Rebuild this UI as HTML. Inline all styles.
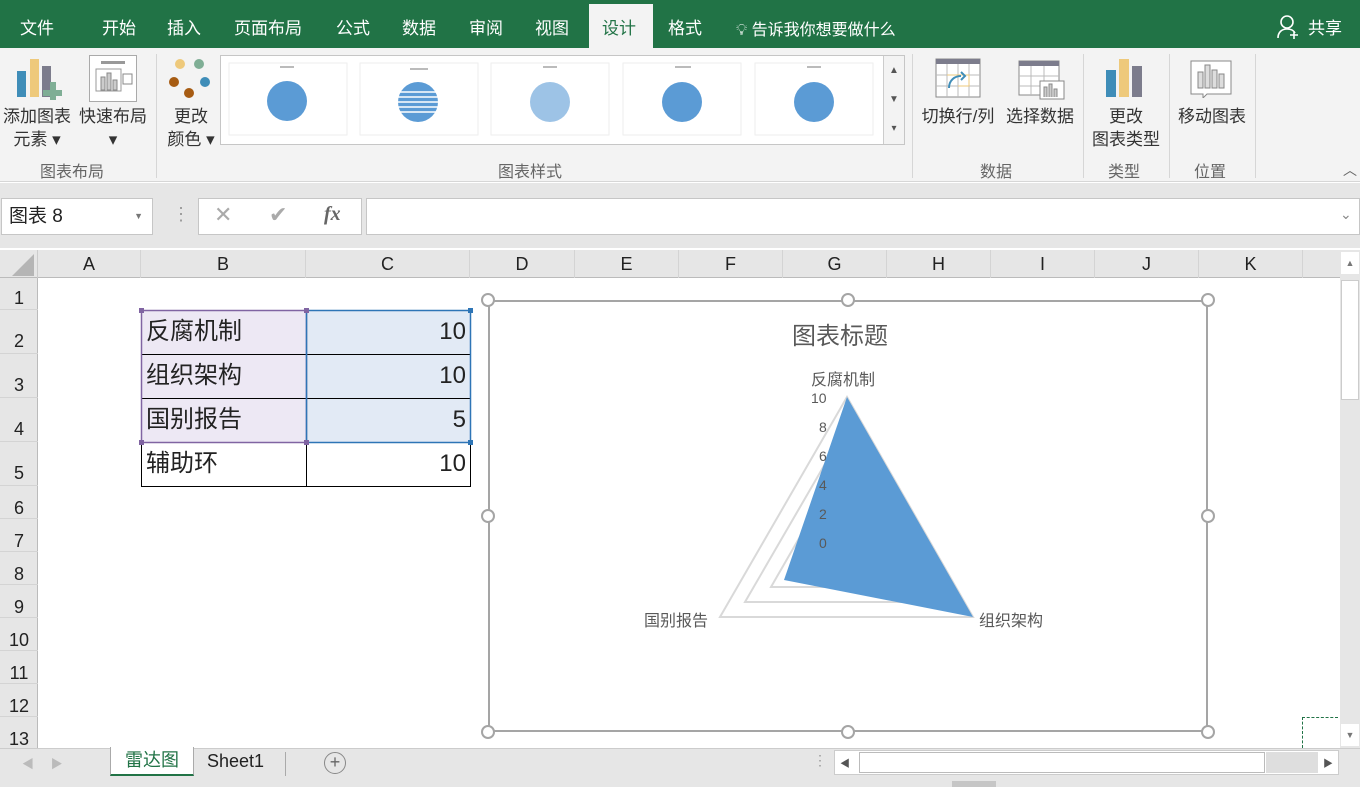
<!DOCTYPE html>
<html><head><meta charset="utf-8"><style>
*{margin:0;padding:0;box-sizing:border-box}
body{width:1360px;height:787px;overflow:hidden;background:#fff;font-family:"Liberation Sans","Noto Sans CJK SC",sans-serif;position:relative;color:#222}
.a{position:absolute}
.tab{position:absolute;top:14px;color:#fff;font-size:17px}
.rl{position:absolute;font-size:17px;color:#333;text-align:center;line-height:23px}
.gl{position:absolute;top:158px;font-size:16px;color:#666}
.ch{position:absolute;top:250px;height:28px;font-size:18px;text-align:center;line-height:28px;border-right:1px solid #d4d4d4;color:#222}
.rh{position:absolute;left:0;width:38px;font-size:18px;text-align:center;border-bottom:1px solid #d4d4d4;color:#222}
.cell{position:absolute;font-size:24px;line-height:44px;height:44px}
.h{position:absolute;width:14px;height:14px;border:2.5px solid #a5a5a5;border-radius:50%;background:#fff}
</style></head><body>
<div class="a" style="left:0;top:0;width:1360px;height:48px;background:#217346"></div>
<div class="tab" style="left:20px">文件</div>
<div class="tab" style="left:102px">开始</div>
<div class="tab" style="left:167px">插入</div>
<div class="tab" style="left:234px">页面布局</div>
<div class="tab" style="left:336px">公式</div>
<div class="tab" style="left:402px">数据</div>
<div class="tab" style="left:469px">审阅</div>
<div class="tab" style="left:535px">视图</div>
<div class="a" style="left:589px;top:4px;width:64px;height:44px;background:#f3f3f3"></div>
<div class="tab" style="left:602px;color:#217346">设计</div>
<div class="tab" style="left:668px">格式</div>
<div class="tab" style="left:736px;font-size:16px;top:16px">💡︎ 告诉我你想要做什么</div>
<svg class="a" style="left:1277px;top:14px" width="24" height="26"><circle cx="10" cy="8" r="6" fill="none" stroke="#fff" stroke-width="1.6"/><path d="M1 24c0-6 4-9 9-9s7 2 8 4M17 17v8M13 21h8" fill="none" stroke="#fff" stroke-width="1.6"/></svg>
<div class="tab" style="left:1308px">共享</div>
<div class="a" style="left:0;top:48px;width:1360px;height:134px;background:#f3f3f3;border-bottom:1px solid #d6d6d6"></div>
<!-- ribbon icons -->
<svg class="a" style="left:16px;top:58px" width="46" height="42"><rect x="1" y="13" width="9" height="26" fill="#3f8db8"/><rect x="14" y="1" width="9" height="38" fill="#eec97b"/><rect x="26" y="8" width="9" height="31" fill="#7c7c8c"/><path d="M34 24h6v8h6v6h-6v4h-6v-4h-7v-6h7z" fill="#7fae95"/></svg>
<div class="a" style="left:89px;top:55px;width:48px;height:47px;border:1px solid #aaa;background:#fff"></div>
<svg class="a" style="left:93px;top:60px" width="42" height="40"><rect x="8" y="1" width="24" height="3" fill="#999"/><rect x="3" y="9" width="25" height="22" fill="none" stroke="#999"/><rect x="8" y="17" width="4" height="13" fill="#ccc" stroke="#888"/><rect x="14" y="13" width="4" height="17" fill="#ccc" stroke="#888"/><rect x="20" y="20" width="4" height="10" fill="#ccc" stroke="#888"/><rect x="30" y="14" width="9" height="10" fill="none" stroke="#888"/></svg>
<div class="rl" style="left:0;top:105px;width:74px">添加图表<br>元素 ▾</div>
<div class="rl" style="left:77px;top:105px;width:72px">快速布局<br>▾</div>
<div class="gl" style="left:40px">图表布局</div>
<div class="a" style="left:156px;top:54px;width:1px;height:124px;background:#d6d6d6"></div>
<svg class="a" style="left:166px;top:58px" width="48" height="42"><circle cx="14" cy="6" r="5" fill="#eec97b"/><circle cx="33" cy="6" r="5" fill="#7fae95"/><circle cx="8" cy="24" r="5" fill="#a65b12"/><circle cx="39" cy="24" r="5" fill="#3f8db8"/><circle cx="23" cy="35" r="5" fill="#a65b12"/></svg>
<div class="rl" style="left:163px;top:105px;width:56px">更改<br>颜色 ▾</div>
<div class="a" style="left:220px;top:55px;width:685px;height:90px;background:#fff;border:1px solid #c6c6c6"></div>
<div class="a" style="left:883px;top:56px;width:21px;height:88px;border-left:1px solid #ccc;background:#f3f3f3;font-size:10px;color:#555;text-align:center;line-height:29px">▲<br>▼<br>▾</div>
<svg class="a" style="left:225px;top:60px" width="655" height="78">
<g fill="#5b9bd5"><circle cx="62" cy="41" r="20"/><circle cx="193" cy="42" r="20"/><circle cx="325" cy="42" r="20" fill="#9dc3e6"/><circle cx="457" cy="42" r="20"/><circle cx="589" cy="42" r="20"/></g>
<g stroke="#fff" stroke-width="1.5"><path d="M173 32h40M173 37h40M173 42h40M173 47h40M173 52h40"/></g>
<g fill="#bbb"><rect x="55" y="6" width="14" height="2"/><rect x="185" y="8" width="18" height="2"/><rect x="318" y="6" width="14" height="2"/><rect x="450" y="6" width="16" height="2"/><rect x="582" y="6" width="14" height="2"/></g>
<g fill="none" stroke="#eee"><rect x="4" y="3" width="118" height="72"/><rect x="135" y="3" width="118" height="72"/><rect x="266" y="3" width="118" height="72"/><rect x="398" y="3" width="118" height="72"/><rect x="530" y="3" width="118" height="72"/></g>
</svg>
<div class="gl" style="left:498px">图表样式</div>
<div class="a" style="left:912px;top:54px;width:1px;height:124px;background:#d6d6d6"></div>
<svg class="a" style="left:935px;top:58px" width="50" height="40"><rect x="1" y="1" width="44" height="38" fill="#fff" stroke="#888"/><rect x="1" y="1" width="44" height="5" fill="#7c7c8c"/><path d="M1 17h44M1 28h44M12 6v33M23 6v33M34 6v33" stroke="#bbb"/><path d="M12 17h22v11h-11" fill="none" stroke="#eec97b"/><path d="M14 30c0-8 6-12 12-12M26 14l4 4-4 4" fill="none" stroke="#3f8db8" stroke-width="2"/></svg>
<svg class="a" style="left:1018px;top:60px" width="48" height="40"><rect x="1" y="1" width="40" height="34" fill="#fff" stroke="#888"/><rect x="1" y="1" width="40" height="5" fill="#7c7c8c"/><path d="M1 16h40M1 26h40M13 6v30M26 6v30" stroke="#bbb"/><rect x="22" y="21" width="24" height="18" fill="#fff" stroke="#888"/><path d="M26 37v-10h3v10M31 37v-13h3v13M36 37v-8h3v8" fill="#ccc" stroke="#888"/></svg>
<div class="rl" style="left:915px;top:105px;width:86px">切换行/列</div>
<div class="rl" style="left:1002px;top:105px;width:76px">选择数据</div>
<div class="gl" style="left:980px">数据</div>
<div class="a" style="left:1083px;top:54px;width:1px;height:124px;background:#d6d6d6"></div>
<svg class="a" style="left:1105px;top:58px" width="40" height="40"><rect x="1" y="12" width="10" height="27" fill="#3f8db8"/><rect x="14" y="1" width="10" height="38" fill="#eec97b"/><rect x="27" y="8" width="10" height="31" fill="#7c7c8c"/></svg>
<div class="rl" style="left:1086px;top:105px;width:80px">更改<br>图表类型</div>
<div class="gl" style="left:1108px">类型</div>
<div class="a" style="left:1169px;top:54px;width:1px;height:124px;background:#d6d6d6"></div>
<svg class="a" style="left:1190px;top:60px" width="44" height="38"><path d="M1 1h40v33H17l-4 4v-4H1z" fill="#fff" stroke="#888"/><rect x="8" y="12" width="5" height="16" fill="#ddd" stroke="#888"/><rect x="15" y="5" width="5" height="23" fill="#ddd" stroke="#888"/><rect x="22" y="10" width="5" height="18" fill="#ddd" stroke="#888"/><rect x="29" y="14" width="5" height="14" fill="#ddd" stroke="#888"/></svg>
<div class="rl" style="left:1172px;top:105px;width:80px">移动图表</div>
<div class="gl" style="left:1194px">位置</div>
<div class="a" style="left:1255px;top:54px;width:1px;height:124px;background:#d6d6d6"></div>
<div class="a" style="left:1343px;top:160px;font-size:14px;color:#666">︿</div>
<!-- formula bar -->
<div class="a" style="left:0;top:183px;width:1360px;height:65px;background:#e6e6e6"></div>
<div class="a" style="left:1px;top:198px;width:152px;height:37px;background:#fff;border:1px solid #c6c6c6;font-size:19px;line-height:35px;padding-left:7px">图表 8<span style="position:absolute;right:9px;font-size:9px;color:#777">▼</span></div>
<div class="a" style="left:172px;top:204px;color:#999;font-size:18px">⋮</div>
<div class="a" style="left:198px;top:198px;width:164px;height:37px;background:#fff;border:1px solid #c6c6c6"></div>
<div class="a" style="left:214px;top:202px;color:#aaa;font-size:22px">✕</div>
<div class="a" style="left:269px;top:202px;color:#aaa;font-size:22px">✔</div>
<div class="a" style="left:324px;top:203px;color:#666;font-size:20px;font-style:italic;font-family:'Liberation Serif',serif;font-weight:bold">fx</div>
<div class="a" style="left:366px;top:198px;width:994px;height:37px;background:#fff;border:1px solid #c6c6c6"></div>
<div class="a" style="left:1340px;top:206px;color:#888;font-size:14px">⌄</div>
<!-- headers -->
<div class="a" style="left:0;top:250px;width:1340px;height:28px;background:#e6e6e6;border-bottom:1px solid #bbb"></div>
<svg class="a" style="left:12px;top:254px" width="22" height="22"><path d="M22 0V22H0z" fill="#b5b5b5"/></svg>
<div class="a" style="left:37px;top:250px;width:1px;height:28px;background:#ccc"></div>
<div class="ch" style="left:38px;width:103px">A</div><div class="ch" style="left:141px;width:165px">B</div><div class="ch" style="left:306px;width:164px">C</div><div class="ch" style="left:470px;width:105px">D</div><div class="ch" style="left:575px;width:104px">E</div><div class="ch" style="left:679px;width:104px">F</div><div class="ch" style="left:783px;width:104px">G</div><div class="ch" style="left:887px;width:104px">H</div><div class="ch" style="left:991px;width:104px">I</div><div class="ch" style="left:1095px;width:104px">J</div><div class="ch" style="left:1199px;width:104px">K</div>
<div class="a" style="left:0;top:278px;width:38px;height:470px;background:#e6e6e6;border-right:1px solid #bbb"></div>
<div class="rh" style="top:278px;height:32px;line-height:40px">1</div>
<div class="rh" style="top:310px;height:44px;line-height:62px">2</div>
<div class="rh" style="top:354px;height:44px;line-height:62px">3</div>
<div class="rh" style="top:398px;height:44px;line-height:62px">4</div>
<div class="rh" style="top:442px;height:44px;line-height:62px">5</div>
<div class="rh" style="top:486px;height:33px;line-height:44px">6</div>
<div class="rh" style="top:519px;height:33px;line-height:44px">7</div>
<div class="rh" style="top:552px;height:33px;line-height:44px">8</div>
<div class="rh" style="top:585px;height:33px;line-height:44px">9</div>
<div class="rh" style="top:618px;height:33px;line-height:44px">10</div>
<div class="rh" style="top:651px;height:33px;line-height:44px">11</div>
<div class="rh" style="top:684px;height:33px;line-height:44px">12</div>
<div class="rh" style="top:717px;height:31px;line-height:44px;border:0">13</div>
<!-- table -->
<div class="a" style="left:141px;top:310px;width:165px;height:132px;background:#ede8f4"></div>
<div class="a" style="left:306px;top:310px;width:164px;height:132px;background:#e2eaf5"></div>
<svg class="a" style="left:138px;top:307px" width="336" height="183">
<g stroke="#000" stroke-width="1" fill="none"><path d="M3.5 47.5H332M3.5 91.5H332M3.5 135.5H332M3.5 179.5H332M3.5 135v45M168.5 3v177M332.5 135v45"/></g>
<rect x="3.5" y="3.5" width="165" height="132" fill="none" stroke="#8064a2" stroke-width="1.5"/>
<rect x="168.5" y="3.5" width="164" height="132" fill="none" stroke="#2e75b6" stroke-width="1.5"/>
<g fill="#8064a2"><rect x="1" y="1" width="5" height="5"/><rect x="166" y="1" width="5" height="5"/><rect x="1" y="133" width="5" height="5"/><rect x="166" y="133" width="5" height="5"/></g>
<g fill="#2e75b6"><rect x="330" y="1" width="5" height="5"/><rect x="330" y="133" width="5" height="5"/></g>
</svg>
<div class="cell" style="left:146px;top:310px">反腐机制</div><div class="cell" style="left:306px;top:310px;width:160px;text-align:right">10</div>
<div class="cell" style="left:146px;top:354px">组织架构</div><div class="cell" style="left:306px;top:354px;width:160px;text-align:right">10</div>
<div class="cell" style="left:146px;top:398px">国别报告</div><div class="cell" style="left:306px;top:398px;width:160px;text-align:right">5</div>
<div class="cell" style="left:146px;top:442px">辅助环</div><div class="cell" style="left:306px;top:442px;width:160px;text-align:right">10</div>
<!-- chart -->
<div class="a" style="left:488px;top:300px;width:720px;height:432px;border:2px solid #a5a5a5;background:#fff"></div>
<svg class="a" style="left:0;top:0" width="1360" height="787">
<g fill="none" stroke="#d9d9d9" stroke-width="2"><path d="M847 397L973 617H720Z"/><path d="M847 426L948 602H745Z"/><path d="M847 455L923 587H771Z"/></g>
<path d="M847 397L973 617L784 580Z" fill="#5b9bd5"/>
<g font-size="14" fill="#595959" font-family="Liberation Sans,sans-serif"><text x="811" y="403">10</text><text x="819" y="432">8</text><text x="819" y="461">6</text><text x="819" y="490">4</text><text x="819" y="519">2</text><text x="819" y="548">0</text></g>
</svg>
<div class="a" style="left:792px;top:316px;font-size:24px;color:#595959">图表标题</div>
<div class="a" style="left:811px;top:366px;font-size:16px;color:#595959">反腐机制</div>
<div class="a" style="left:644px;top:607px;font-size:16px;color:#595959">国别报告</div>
<div class="a" style="left:979px;top:607px;font-size:16px;color:#595959">组织架构</div>
<div class="h" style="left:481px;top:293px"></div><div class="h" style="left:841px;top:293px"></div><div class="h" style="left:1201px;top:293px"></div>
<div class="h" style="left:481px;top:509px"></div><div class="h" style="left:1201px;top:509px"></div>
<div class="h" style="left:481px;top:725px"></div><div class="h" style="left:841px;top:725px"></div><div class="h" style="left:1201px;top:725px"></div>
<div class="a" style="left:1302px;top:717px;width:36px;height:31px;border:1.5px dashed #217346;border-right:0;border-bottom:0"></div>
<!-- right scrollbar -->
<div class="a" style="left:1340px;top:250px;width:20px;height:498px;background:#e6e6e6"></div>
<div class="a" style="left:1341px;top:252px;width:18px;height:22px;background:#fff;font-size:9px;color:#777;text-align:center;line-height:22px">▲</div>
<div class="a" style="left:1341px;top:280px;width:18px;height:120px;background:#fff;border:1px solid #ccc"></div>
<div class="a" style="left:1341px;top:724px;width:18px;height:22px;background:#fff;font-size:9px;color:#777;text-align:center;line-height:22px">▼</div>
<!-- sheet tabs -->
<div class="a" style="left:0;top:748px;width:1360px;height:39px;background:#e6e6e6;border-top:1px solid #ccc"></div>
<div class="a" style="left:22px;top:755px;color:#bbb;font-size:12px">◀&nbsp;&nbsp;&nbsp;&nbsp;&nbsp;▶</div>
<div class="a" style="left:110px;top:747px;width:84px;height:29px;background:#fff;border-bottom:2px solid #217346;border-left:1px solid #aaa;border-right:1px solid #aaa;color:#217346;font-size:18px;text-align:center;line-height:26px">雷达图</div>
<div class="a" style="left:207px;top:748px;font-size:18px;line-height:26px">Sheet1</div>
<div class="a" style="left:285px;top:752px;width:1px;height:24px;background:#aaa"></div>
<div class="a" style="left:324px;top:752px;width:22px;height:22px;border:1.5px solid #888;border-radius:50%;text-align:center;line-height:18px;color:#666;font-size:18px">+</div>
<div class="a" style="left:813px;top:752px;color:#999;font-size:14px">⋮</div>
<div class="a" style="left:834px;top:750px;width:505px;height:25px;background:#fff;border:1px solid #ccc"></div>
<div class="a" style="left:859px;top:752px;width:406px;height:21px;background:#fff;border:1px solid #bbb"></div>
<div class="a" style="left:1266px;top:752px;width:52px;height:21px;background:#dedede"></div>
<div class="a" style="left:840px;top:755px;font-size:10px;color:#555">◀</div>
<div class="a" style="left:1323px;top:755px;font-size:10px;color:#555">▶</div>
<div class="a" style="left:952px;top:781px;width:44px;height:6px;background:#c6c6c6"></div>
</body></html>
